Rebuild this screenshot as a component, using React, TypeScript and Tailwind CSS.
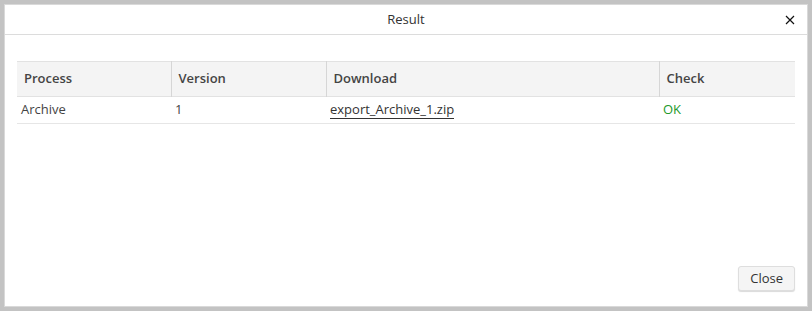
export default function App() {
  return (
    <div
      className="w-[812px] h-[311px] bg-[#c3c3c3] p-[4px] text-[13px] text-[#333]"
      style={{ fontFamily: '"Open Sans", "Liberation Sans", sans-serif' }}
    >
      <div className="h-full bg-white border border-[#d9d9d9] flex flex-col">
        <div className="h-[30px] flex items-center justify-center relative border-b border-[#dcdcdc]">
          <span className="text-[#333]">Result</span>
          <button className="absolute right-[9px] top-[7px] w-[16px] h-[16px] flex items-center justify-center">
            <svg width="10" height="10" viewBox="0 0 10 10">
              <path d="M1 1L9 9M9 1L1 9" stroke="#111" strokeWidth="1.2" />
            </svg>
          </button>
        </div>
        <div className="flex-1 px-[12px] pt-[26px]">
          <table className="w-full border-collapse">
            <thead>
              <tr className="bg-[#f4f4f4] h-[35px] border-t border-b border-[#e2e2e2]">
                <th className="w-[154px] text-left font-semibold text-[#444] px-[7px]">Process</th>
                <th className="w-[155px] text-left font-semibold text-[#444] px-[7px] border-l border-[#d6d6d6]">Version</th>
                <th className="w-[333px] text-left font-semibold text-[#444] px-[7px] border-l border-[#d6d6d6]">Download</th>
                <th className="text-left font-semibold text-[#444] px-[7px] border-l border-[#d6d6d6]">Check</th>
              </tr>
            </thead>
            <tbody>
              <tr className="h-[27px] border-b border-[#e6e6e6]">
                <td className="px-[4px] text-[#444]">Archive</td>
                <td className="px-[4px] text-[#444]">1</td>
                <td className="px-[4px]">
                  <span className="text-[#333] border-b border-[#333] leading-[17px] inline-block">
                    export_Archive_1.zip
                  </span>
                </td>
                <td className="px-[4px] text-[#22992a]">OK</td>
              </tr>
            </tbody>
          </table>
        </div>
        <div className="flex justify-end px-[12px] pb-[15px]">
          <button className="h-[25px] px-[11px] bg-[#f5f5f5] border border-[#dedede] rounded-[3px] shadow-[0_1px_1px_rgba(0,0,0,0.15)] text-[#333]">
            Close
          </button>
        </div>
      </div>
    </div>
  );
}
